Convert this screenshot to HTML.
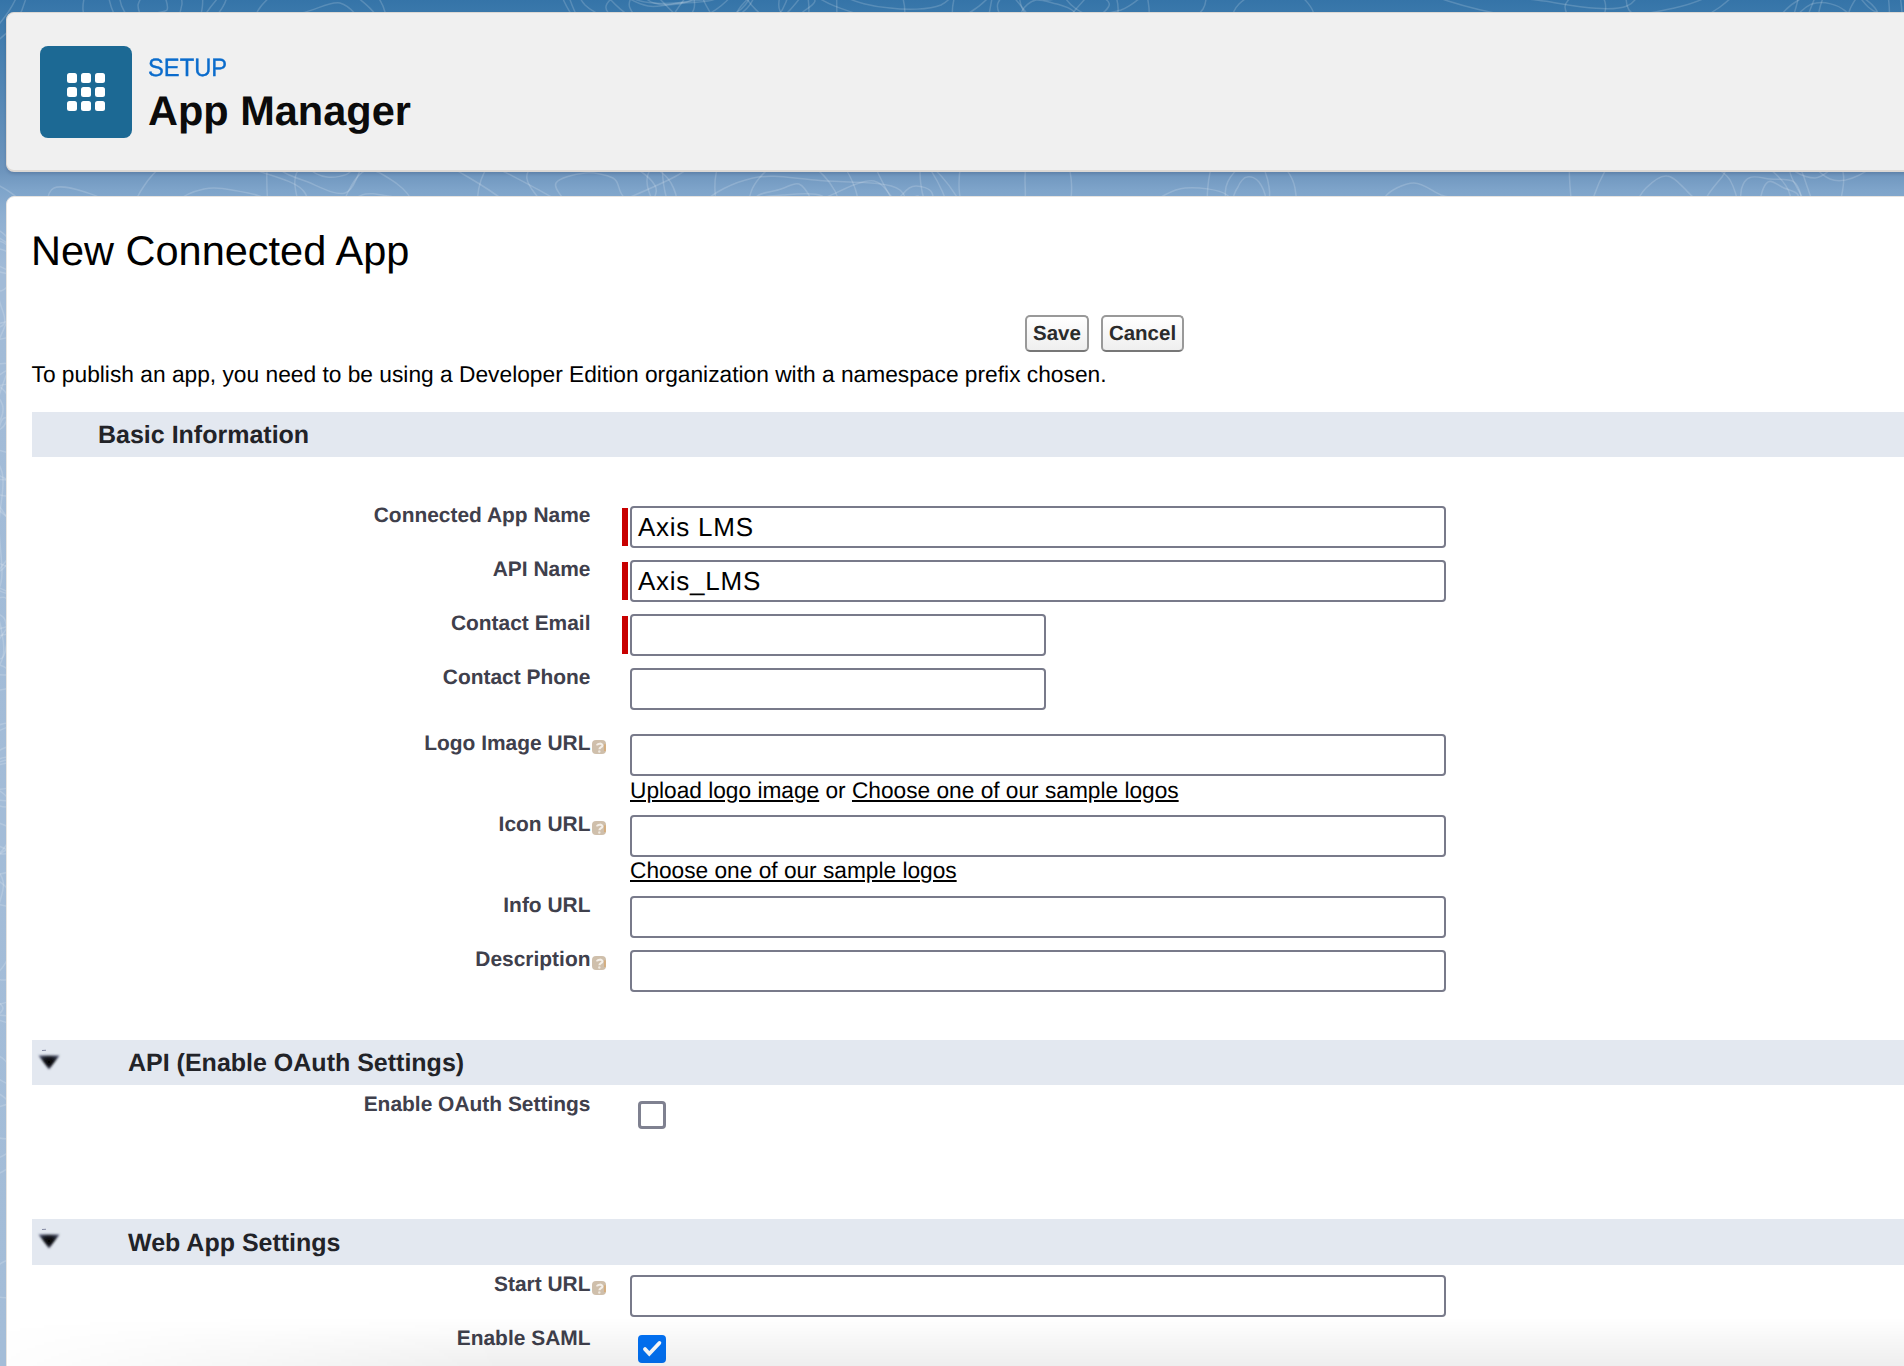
<!DOCTYPE html>
<html><head><meta charset="utf-8">
<style>
html,body{margin:0;padding:0;width:1904px;height:1366px;overflow:hidden;}
*{text-rendering:geometricPrecision;}
body{position:relative;font-family:"Liberation Sans",sans-serif;background:linear-gradient(180deg,#3574a8 0px,#3a78ab 12px,#6e95bd 172px,#7ea4ca 190px,#8eafd1 215px,#a2bbd7 270px,#a4bdd8 1366px);}
.abs{position:absolute;}
.hdr{left:6px;top:12px;width:1920px;height:157px;background:#f0f0f0;border:1px solid #dcd8d4;border-bottom-width:2px;border-radius:8px;box-sizing:content-box;box-shadow:0 2px 3px rgba(20,40,80,0.18);}
.icon{left:40px;top:46px;width:92px;height:92px;background:#1c6994;border-radius:8px;}
.dot{position:absolute;width:10px;height:10px;background:#fff;border-radius:2.5px;}
.setup{left:148px;top:53px;font-size:25px;color:#0b6ccc;-webkit-text-stroke:0.35px #0b6ccc;line-height:30px;transform:scaleX(0.95);transform-origin:0 0;}
.appm{left:148px;top:88px;font-size:41.5px;font-weight:700;color:#0b0b0b;line-height:46px;}
.card{left:6px;top:196px;width:1920px;height:1200px;background:#fff;border:1.5px solid #e6e4e1;border-radius:8px;}
.h1{left:31px;top:226px;font-size:41.5px;color:#000;line-height:50px;white-space:nowrap;}
.btn{top:315px;height:37px;box-sizing:border-box;border:2px solid #999;border-bottom-color:#777;border-radius:5px;background:linear-gradient(#ffffff,#efefef);font-size:20.5px;font-weight:700;color:#2b2b2b;line-height:32px;padding-top:1px;text-align:center;}
.note{left:31.5px;top:359px;font-size:22.75px;color:#000;line-height:30px;white-space:nowrap;}
.sec{left:32px;width:1880px;height:45px;background:#e3e8f0;}
.sech{font-size:25px;font-weight:700;color:#222328;line-height:30px;white-space:nowrap;}
.lbl{font-size:20.95px;font-weight:700;color:#3f404c;line-height:26px;white-space:nowrap;text-align:right;right:1313.5px;margin-top:1px;}
.inp{left:630px;height:42px;box-sizing:border-box;border:2px solid #787a8a;border-radius:4px;background:#fff;}
.w816{width:816px;}
.w416{width:416px;}
.req{left:622px;width:6px;height:38px;background:#c80000;}
.val{left:638px;letter-spacing:0.75px;font-size:26px;color:#000;line-height:32px;white-space:nowrap;}
.lnk{left:630px;font-size:22.7px;color:#000;line-height:28px;white-space:nowrap;}
.lnk u{text-decoration:underline;text-underline-offset:2px;}
.help{width:14px;height:14px;}
.cb{left:638px;width:28px;height:28px;box-sizing:border-box;border:3.6px solid #7f8190;border-radius:4px;background:#fff;}
.cbon{background:#0372f5;border-color:#0372f5;}
.tw{left:36px;width:26px;height:24px;}
.fade{left:8px;top:1318px;width:1896px;height:48px;background:linear-gradient(rgba(0,0,0,0) 0%,rgba(0,0,0,0.065) 100%);-webkit-mask-image:linear-gradient(90deg,rgba(0,0,0,0.1),#000 500px);}
</style></head>
<body>
<svg class="abs" style="left:0;top:0" width="1904" height="1366" viewBox="0 0 1904 1366"><g fill="none" stroke="#fff" stroke-opacity="0.17" stroke-width="1.5"><path d="M870 245C861 247 849 249 840 247C831 245 817 240 815 235C813 230 824 222 828 217C832 213 835 207 842 205C848 204 856 206 865 208C874 209 890 209 895 213C900 217 898 228 893 233C889 239 879 243 870 245"/><path d="M942 238C942 249 917 266 899 272C882 277 853 274 835 270C816 266 795 256 789 247C783 238 793 223 799 215C806 206 817 202 829 196C841 191 862 179 874 181C885 183 890 198 901 208C912 217 942 228 942 238"/><path d="M303 150C305 145 310 140 315 137C320 134 328 131 334 131C340 132 347 137 350 141C353 145 352 149 352 154C352 160 355 168 350 172C346 176 334 178 327 177C319 176 311 171 307 167C303 162 302 155 303 150"/><path d="M319 121C329 119 342 122 351 125C359 129 369 137 371 144C373 151 366 158 362 166C358 174 354 190 345 193C336 196 320 187 308 182C296 178 278 172 275 164C272 156 284 143 291 135C299 128 309 122 319 121"/><path d="M1889 20C1888 29 1884 35 1881 42C1877 49 1875 61 1869 64C1864 67 1853 64 1849 58C1845 52 1845 37 1845 29C1845 20 1848 14 1851 7C1854 1 1858 -5 1863 -8C1869 -12 1881 -17 1885 -12C1889 -7 1890 11 1889 20"/><path d="M1868 -30C1878 -28 1890 -25 1896 -16C1901 -6 1903 14 1902 27C1901 41 1896 51 1889 64C1883 77 1872 107 1863 106C1855 106 1845 77 1838 63C1830 49 1819 36 1818 21C1818 6 1828 -17 1836 -26C1844 -34 1858 -32 1868 -30"/><path d="M1894 133C1877 137 1861 111 1844 100C1828 88 1802 83 1797 65C1793 47 1809 14 1817 -8C1824 -30 1830 -59 1842 -67C1854 -75 1876 -64 1889 -55C1902 -45 1912 -30 1922 -8C1931 14 1950 54 1945 77C1941 101 1911 130 1894 133"/><path d="M1893 -90C1917 -76 1958 -73 1965 -47C1973 -22 1948 31 1938 62C1927 94 1921 121 1903 140C1885 160 1851 188 1830 179C1810 171 1783 120 1778 89C1773 57 1794 27 1800 -10C1806 -47 1800 -119 1816 -132C1831 -145 1868 -104 1893 -90"/><path d="M408 231C403 237 392 238 383 240C374 242 363 246 356 242C349 239 345 227 344 219C342 211 343 202 347 194C351 186 358 172 367 170C375 168 388 178 396 183C404 189 411 196 413 204C415 212 413 225 408 231"/><path d="M1701 -11C1696 -7 1684 -6 1677 -8C1669 -9 1658 -15 1655 -21C1651 -28 1653 -40 1655 -48C1657 -56 1661 -67 1667 -70C1672 -73 1682 -69 1688 -67C1694 -64 1699 -60 1702 -55C1705 -50 1706 -44 1706 -36C1706 -29 1706 -16 1701 -11"/><path d="M1634 -46C1636 -64 1632 -88 1641 -97C1650 -106 1673 -104 1687 -102C1701 -99 1714 -92 1725 -81C1736 -70 1754 -50 1754 -36C1753 -21 1733 -3 1720 7C1708 16 1694 22 1679 23C1663 23 1636 21 1629 10C1621 -2 1632 -28 1634 -46"/><path d="M1904 -61C1910 -61 1920 -62 1925 -59C1929 -57 1931 -51 1931 -47C1930 -44 1925 -41 1921 -38C1916 -35 1911 -32 1905 -32C1898 -31 1889 -32 1883 -34C1876 -37 1865 -43 1866 -47C1867 -51 1881 -55 1888 -57C1894 -59 1898 -61 1904 -61"/><path d="M1941 -22C1930 -17 1914 -17 1900 -17C1886 -17 1863 -17 1854 -22C1845 -28 1845 -41 1846 -50C1846 -60 1847 -75 1858 -80C1868 -85 1893 -84 1909 -83C1926 -82 1951 -81 1959 -75C1968 -68 1964 -53 1961 -45C1958 -36 1951 -27 1941 -22"/><path d="M682 -15C675 -12 669 -6 662 -6C655 -6 644 -10 640 -14C636 -18 640 -24 639 -30C638 -36 631 -47 636 -51C641 -56 660 -57 668 -56C676 -54 679 -46 686 -41C693 -36 710 -31 709 -27C709 -22 690 -19 682 -15"/><path d="M637 0C625 -4 603 -12 600 -20C598 -28 614 -37 622 -48C630 -58 633 -77 648 -82C663 -87 700 -84 711 -76C721 -69 711 -48 713 -36C715 -24 727 -11 721 -4C715 2 689 3 675 3C661 4 649 4 637 0"/><path d="M617 -82C634 -87 663 -80 682 -76C700 -72 719 -65 729 -55C738 -46 743 -29 739 -17C735 -5 721 8 705 16C690 23 665 29 645 27C625 25 596 16 585 5C574 -7 573 -28 578 -43C584 -57 600 -76 617 -82"/><path d="M1812 211C1807 206 1806 203 1802 197C1799 190 1789 176 1790 171C1792 165 1805 166 1811 162C1817 159 1824 148 1829 150C1834 151 1841 164 1843 172C1845 180 1843 190 1841 199C1839 208 1835 223 1830 225C1825 227 1816 216 1812 211"/><path d="M658 -45C658 -52 660 -62 664 -67C669 -71 678 -72 686 -73C693 -74 704 -75 710 -70C716 -66 723 -54 724 -46C724 -38 718 -25 712 -20C706 -16 694 -18 686 -19C679 -20 672 -22 667 -27C662 -31 659 -39 658 -45"/><path d="M700 28C685 28 668 7 657 -4C647 -15 641 -24 638 -37C635 -49 634 -63 640 -77C645 -90 660 -117 672 -118C684 -119 701 -93 711 -83C721 -72 725 -68 731 -54C738 -41 755 -16 750 -3C745 11 716 28 700 28"/><path d="M717 -108C736 -97 758 -93 770 -74C781 -56 794 -19 786 2C778 24 744 50 721 54C698 59 669 41 649 29C629 17 609 3 600 -16C591 -36 588 -68 597 -88C606 -109 633 -137 653 -140C673 -143 697 -119 717 -108"/><path d="M755 -151C777 -137 782 -98 790 -68C799 -37 818 10 804 30C790 51 739 50 707 55C676 60 642 71 617 59C592 47 561 8 558 -19C555 -46 581 -80 599 -102C616 -124 637 -143 663 -151C690 -160 734 -165 755 -151"/><path d="M1249 220C1246 219 1244 217 1242 214C1239 212 1234 208 1233 203C1232 199 1235 191 1238 187C1240 182 1244 177 1247 177C1251 176 1256 178 1259 182C1262 186 1265 193 1266 199C1266 205 1265 217 1262 220C1260 224 1253 221 1249 220"/><path d="M1239 168C1245 164 1254 158 1259 161C1263 164 1268 178 1269 187C1271 196 1269 204 1267 213C1266 222 1264 235 1259 241C1254 246 1243 251 1237 247C1232 243 1230 226 1228 216C1226 206 1224 195 1226 187C1228 179 1234 172 1239 168"/><path d="M1223 260C1215 254 1210 230 1208 213C1206 197 1208 176 1213 162C1218 148 1231 130 1240 129C1250 127 1261 141 1270 151C1279 161 1292 172 1295 188C1298 203 1297 236 1290 246C1283 257 1265 248 1254 250C1243 252 1231 267 1223 260"/><path d="M1796 172C1791 169 1784 164 1784 160C1784 156 1789 151 1794 147C1799 144 1809 141 1816 141C1822 141 1829 147 1833 150C1838 153 1844 157 1843 161C1843 164 1835 167 1830 170C1826 173 1821 178 1815 178C1809 178 1801 175 1796 172"/><path d="M1605 2C1606 6 1606 13 1603 16C1601 19 1594 18 1589 19C1584 20 1577 23 1573 21C1569 19 1565 11 1565 7C1565 3 1570 -2 1574 -5C1577 -8 1581 -8 1585 -9C1589 -9 1594 -11 1597 -9C1600 -7 1604 -2 1605 2"/><path d="M1057 4C1063 6 1068 7 1072 10C1076 13 1082 20 1080 23C1078 26 1066 27 1060 28C1054 29 1050 30 1044 29C1038 28 1030 27 1027 24C1023 21 1021 15 1022 11C1024 7 1030 1 1036 -0C1042 -1 1051 3 1057 4"/><path d="M1027 -19C1039 -21 1057 -15 1070 -11C1084 -8 1107 -4 1109 3C1112 9 1093 20 1086 26C1079 32 1076 38 1066 41C1057 44 1040 48 1031 45C1021 43 1015 34 1009 27C1004 20 995 11 998 3C1001 -4 1015 -16 1027 -19"/><path d="M1002 -18C1014 -27 1040 -38 1058 -37C1076 -36 1100 -23 1109 -13C1119 -4 1119 10 1117 20C1114 31 1107 41 1095 49C1083 57 1062 70 1043 71C1024 71 990 62 981 52C972 43 985 25 989 14C992 2 991 -10 1002 -18"/><path d="M1124 -44C1142 -38 1147 -9 1149 8C1150 24 1147 44 1133 54C1119 63 1087 64 1063 66C1039 68 1010 73 991 66C973 59 958 40 954 26C950 11 953 -12 967 -21C981 -29 1014 -23 1040 -26C1066 -30 1106 -50 1124 -44"/><path d="M1919 -18C1924 -12 1931 -4 1929 2C1927 8 1914 15 1906 17C1897 19 1885 16 1878 13C1870 10 1866 5 1862 0C1859 -5 1854 -12 1857 -17C1859 -21 1868 -25 1876 -28C1883 -32 1896 -38 1903 -36C1911 -35 1915 -25 1919 -18"/><path d="M1838 45C1834 47 1826 44 1821 43C1816 43 1812 43 1809 41C1806 39 1805 35 1804 32C1803 28 1803 22 1806 20C1809 17 1817 18 1822 18C1827 19 1832 20 1835 22C1839 25 1843 29 1843 32C1844 36 1841 43 1838 45"/><path d="M1856 52C1851 57 1835 54 1825 55C1815 55 1803 58 1797 55C1791 52 1788 41 1788 35C1788 29 1791 23 1796 17C1800 12 1808 4 1816 3C1824 1 1838 5 1844 10C1851 14 1855 22 1857 29C1859 36 1862 48 1856 52"/><path d="M1771 55C1766 46 1772 33 1776 24C1780 15 1787 7 1797 1C1807 -5 1823 -14 1836 -13C1849 -12 1868 -1 1875 8C1882 17 1881 31 1878 42C1875 54 1869 70 1857 76C1845 82 1821 80 1807 76C1792 73 1776 63 1771 55"/><path d="M1686 190C1692 197 1705 206 1704 213C1704 220 1689 228 1682 232C1675 236 1670 236 1661 237C1652 238 1634 242 1630 237C1626 232 1633 215 1636 206C1638 198 1641 193 1646 188C1651 183 1660 175 1667 176C1673 176 1680 184 1686 190"/><path d="M1586 243C1580 228 1592 201 1599 183C1607 166 1620 144 1634 139C1648 134 1668 149 1684 156C1700 163 1721 166 1730 180C1738 194 1744 226 1737 239C1729 252 1701 252 1684 258C1668 264 1654 278 1638 276C1622 273 1593 259 1586 243"/><path d="M1590 303C1573 285 1575 247 1573 219C1571 192 1564 158 1577 139C1590 119 1628 101 1652 101C1676 101 1697 122 1720 137C1743 153 1784 171 1790 195C1796 220 1774 262 1755 284C1736 306 1704 324 1676 327C1649 330 1608 320 1590 303"/><path d="M919 221C917 222 914 223 911 223C909 222 904 221 903 218C902 215 901 209 903 207C904 204 907 203 910 201C912 199 916 195 918 196C920 197 921 203 922 206C923 209 923 212 923 214C922 217 920 220 919 221"/><path d="M898 227C895 223 893 214 894 209C895 203 899 197 903 194C906 190 911 186 916 186C921 186 930 188 932 193C935 197 931 207 930 213C929 219 929 224 926 228C923 232 917 236 912 236C907 236 901 232 898 227"/><path d="M687 -32C690 -29 691 -25 691 -21C690 -18 688 -13 684 -11C680 -9 672 -9 667 -10C662 -10 658 -13 655 -16C652 -18 648 -22 649 -24C649 -27 653 -30 657 -33C661 -35 667 -39 672 -39C677 -39 684 -35 687 -32"/><path d="M680 -42C690 -40 705 -40 710 -35C715 -31 712 -20 709 -14C705 -8 696 -1 687 2C678 5 663 6 654 3C646 1 642 -7 638 -13C633 -19 625 -27 627 -33C629 -39 641 -48 650 -49C659 -51 670 -45 680 -42"/><path d="M648 -61C658 -65 684 -64 696 -59C707 -55 713 -43 718 -34C722 -25 730 -12 725 -6C719 -0 696 -0 683 2C670 4 659 8 648 6C637 4 621 -5 619 -11C616 -18 629 -25 633 -34C638 -42 638 -57 648 -61"/><path d="M644 20C637 18 631 12 630 8C628 4 630 -2 634 -6C638 -9 647 -11 655 -12C663 -14 676 -17 682 -15C689 -14 693 -6 694 -1C695 4 695 10 691 14C687 18 677 23 670 24C662 25 650 23 644 20"/><path d="M704 1C707 9 717 19 711 26C705 33 683 42 670 42C656 42 641 32 630 27C619 21 606 14 606 8C605 1 618 -6 626 -12C635 -17 644 -22 655 -24C667 -25 687 -25 695 -21C703 -17 701 -7 704 1"/><path d="M722 29C710 40 698 61 679 64C660 67 627 54 609 45C592 37 581 25 575 12C569 -1 560 -23 572 -33C584 -42 621 -44 646 -47C672 -50 708 -55 726 -48C744 -41 754 -18 754 -5C753 8 735 17 722 29"/><path d="M1540 -49C1539 -54 1536 -60 1539 -64C1543 -69 1555 -74 1562 -74C1570 -75 1576 -68 1585 -65C1593 -62 1612 -61 1614 -57C1616 -53 1604 -45 1598 -41C1591 -37 1584 -32 1576 -31C1567 -30 1553 -31 1547 -34C1541 -37 1541 -44 1540 -49"/><path d="M1529 -26C1516 -31 1496 -41 1494 -50C1492 -59 1504 -74 1516 -80C1528 -86 1548 -86 1565 -87C1583 -88 1610 -91 1621 -86C1631 -80 1632 -63 1630 -54C1628 -46 1616 -39 1607 -33C1597 -27 1586 -19 1573 -18C1560 -17 1542 -21 1529 -26"/><path d="M1648 -40C1639 -24 1644 -1 1627 6C1609 13 1571 5 1544 1C1516 -3 1475 -5 1461 -17C1446 -29 1445 -58 1457 -70C1469 -83 1507 -82 1532 -91C1556 -100 1579 -125 1604 -125C1628 -125 1672 -103 1680 -89C1687 -75 1657 -56 1648 -40"/><path d="M1717 -10C1700 7 1645 14 1610 19C1576 23 1544 23 1510 16C1476 10 1415 -5 1408 -21C1400 -37 1446 -64 1466 -82C1486 -100 1496 -118 1526 -127C1555 -137 1613 -147 1644 -139C1675 -131 1700 -102 1713 -80C1725 -59 1734 -26 1717 -10"/><path d="M889 46C886 47 883 49 881 48C879 47 878 43 877 40C877 38 875 35 876 33C877 30 880 27 883 26C886 25 890 27 892 28C895 30 896 33 897 35C898 38 899 42 898 43C897 45 892 45 889 46"/><path d="M734 22C734 13 742 4 750 -3C758 -10 769 -17 782 -20C796 -22 821 -23 830 -18C839 -12 836 4 837 14C838 24 842 35 836 42C829 50 811 59 797 60C782 61 761 57 751 51C740 44 734 31 734 22"/><path d="M823 76C800 80 779 78 753 74C727 70 676 65 666 51C655 37 678 7 692 -11C705 -28 725 -50 747 -54C769 -59 799 -44 824 -37C849 -29 886 -25 898 -11C909 3 906 34 893 48C881 63 846 72 823 76"/><path d="M-30 -50C-27 -49 -24 -44 -22 -41C-19 -38 -18 -37 -18 -34C-17 -31 -15 -24 -17 -22C-20 -20 -28 -21 -32 -21C-36 -22 -39 -24 -42 -26C-44 -28 -46 -32 -46 -34C-46 -37 -44 -41 -42 -43C-39 -46 -34 -50 -30 -50"/><path d="M168 227C166 219 172 207 178 201C184 195 195 191 204 189C213 187 222 188 232 190C242 192 262 194 267 201C272 207 266 222 260 229C254 236 241 239 230 242C220 245 205 251 195 249C185 246 171 235 168 227"/><path d="M249 168C268 175 298 181 305 193C313 206 307 231 296 245C286 258 261 270 242 273C223 277 199 272 181 265C163 258 139 247 133 234C127 221 134 200 144 186C153 172 172 154 190 151C207 148 230 161 249 168"/><path d="M1577 -25C1580 -26 1584 -27 1586 -26C1588 -25 1588 -20 1589 -17C1590 -14 1593 -10 1592 -7C1591 -5 1586 -5 1584 -4C1581 -3 1578 -1 1576 -2C1574 -3 1573 -7 1572 -10C1571 -13 1568 -17 1569 -20C1570 -22 1574 -24 1577 -25"/><path d="M566 203C563 197 553 188 556 183C559 178 575 174 585 173C594 172 607 175 613 178C619 181 618 188 621 193C624 199 634 208 631 211C628 214 611 212 602 214C592 215 581 221 576 219C570 217 569 208 566 203"/><path d="M528 172C533 163 559 152 576 150C592 149 613 157 626 163C640 170 653 179 656 188C658 196 649 206 641 215C634 224 625 239 612 241C600 243 578 234 567 228C556 222 552 215 545 206C538 197 522 181 528 172"/><path d="M481 219C474 202 478 174 493 162C508 150 548 148 571 147C594 145 614 150 630 156C647 162 665 172 671 183C678 195 681 215 672 224C662 234 637 235 615 242C593 248 561 268 539 264C516 260 489 236 481 219"/><path d="M807 -11C809 -6 815 -2 815 1C814 5 808 8 804 11C800 14 796 20 792 20C788 20 782 15 780 11C778 7 779 -0 780 -4C781 -9 783 -12 786 -15C790 -18 795 -25 799 -24C802 -23 804 -15 807 -11"/><path d="M959 183C959 174 960 163 966 156C971 150 982 145 992 144C1001 144 1016 145 1021 151C1027 157 1025 171 1025 180C1025 190 1027 202 1022 208C1017 215 1004 218 995 218C985 218 972 217 966 211C960 205 959 192 959 183"/><path d="M1019 111C1035 115 1055 133 1063 149C1071 165 1075 193 1068 209C1061 225 1038 238 1022 244C1006 249 987 247 971 242C956 236 937 226 929 211C921 197 917 170 923 156C930 142 952 134 968 127C984 119 1003 107 1019 111"/><path d="M768 221C763 215 753 203 756 198C758 192 774 192 781 189C788 187 794 182 799 184C804 186 808 193 811 199C815 205 822 212 821 219C820 226 813 238 806 240C800 242 790 236 784 232C777 229 773 227 768 221"/><path d="M841 230C838 243 826 257 813 264C801 271 775 280 765 274C755 267 755 239 753 225C751 212 747 202 751 192C754 183 764 171 773 166C783 162 799 161 809 165C819 169 829 180 835 191C840 202 845 218 841 230"/><path d="M773 123C791 121 815 138 829 150C843 162 853 179 857 195C861 212 860 236 851 249C842 263 823 269 805 276C786 282 754 298 739 289C725 281 722 246 719 225C716 203 711 179 720 162C729 146 755 125 773 123"/><path d="M835 110C856 121 866 150 879 175C891 201 918 237 911 264C905 291 865 330 839 336C812 342 776 315 750 301C725 286 701 274 687 250C673 225 655 176 666 153C677 129 725 114 753 107C781 100 814 99 835 110"/><path d="M402 198C418 199 445 195 455 201C465 208 467 226 463 237C458 247 444 260 430 265C415 271 389 275 375 272C360 268 348 254 343 245C337 236 339 227 342 218C346 210 352 198 362 195C372 191 387 197 402 198"/><path d="M468 177C490 190 524 211 522 226C520 241 478 252 456 267C434 282 418 312 392 315C366 319 313 301 298 286C283 271 302 246 302 226C303 206 286 180 301 167C316 154 364 147 392 148C420 150 446 164 468 177"/><path d="M268 218C269 193 259 153 282 139C305 126 369 133 406 138C442 143 468 152 499 169C531 186 601 219 597 239C593 260 513 281 477 292C440 304 413 311 379 310C345 309 292 303 274 288C255 273 267 243 268 218"/><path d="M1195 222C1194 225 1192 227 1189 229C1186 231 1182 234 1177 235C1173 235 1166 232 1163 230C1161 227 1161 222 1162 220C1164 217 1168 216 1171 214C1175 212 1178 210 1182 210C1186 210 1192 212 1194 214C1196 216 1195 220 1195 222"/><path d="M1221 212C1224 216 1213 225 1208 230C1203 235 1198 240 1191 242C1183 244 1173 244 1164 243C1155 241 1141 236 1138 231C1135 226 1140 215 1146 210C1151 206 1164 205 1171 205C1179 204 1183 204 1191 205C1199 206 1218 207 1221 212"/><path d="M1215 250C1205 256 1188 259 1174 258C1161 258 1144 253 1135 246C1126 239 1118 225 1121 217C1124 210 1144 205 1154 200C1165 196 1172 189 1185 188C1197 187 1219 189 1227 195C1236 201 1239 216 1237 225C1235 234 1226 244 1215 250"/><path d="M937 -47C946 -41 959 -33 960 -24C960 -16 953 -1 941 5C929 10 906 10 890 8C874 7 852 2 843 -5C834 -13 833 -28 837 -37C841 -46 855 -57 867 -60C879 -63 896 -59 908 -57C919 -55 929 -52 937 -47"/><path d="M938 26C917 30 889 23 868 17C847 11 821 3 812 -8C803 -20 807 -39 815 -53C823 -67 839 -84 861 -91C883 -98 923 -102 945 -96C968 -90 989 -70 996 -55C1004 -40 1002 -20 992 -7C982 7 958 22 938 26"/><path d="M143 -4C145 -7 148 -10 151 -10C154 -11 158 -10 161 -8C163 -6 165 -3 166 -0C167 3 168 8 167 10C165 12 160 12 156 13C152 15 146 19 143 18C140 16 138 9 138 5C139 1 141 -2 143 -4"/><path d="M120 -0C120 -7 124 -17 130 -23C136 -28 149 -33 156 -31C164 -30 171 -21 176 -15C180 -9 182 -2 182 4C181 10 178 20 173 23C168 26 159 23 152 23C145 22 137 24 132 20C126 16 121 7 120 -0"/><path d="M136 -49C147 -52 167 -48 178 -41C189 -35 198 -23 201 -12C204 -1 203 15 197 22C191 30 174 29 164 31C154 34 143 39 135 36C127 33 119 23 114 14C110 5 106 -8 110 -19C113 -29 124 -45 136 -49"/><path d="M198 34C187 45 175 55 161 58C146 61 123 61 110 53C97 45 84 24 83 10C82 -5 93 -26 104 -34C114 -43 133 -40 148 -42C164 -45 183 -54 197 -48C210 -42 227 -20 227 -6C227 8 209 24 198 34"/><path d="M1032 -33C1033 -38 1034 -48 1038 -52C1042 -55 1053 -56 1057 -53C1061 -49 1061 -39 1063 -32C1065 -26 1068 -19 1067 -14C1065 -9 1059 -3 1054 -1C1049 1 1042 -0 1038 -3C1034 -6 1032 -13 1031 -18C1029 -22 1030 -27 1032 -33"/><path d="M1072 -56C1081 -50 1097 -37 1098 -26C1099 -15 1084 -0 1076 9C1068 19 1056 33 1047 32C1038 32 1029 15 1021 6C1014 -3 1004 -13 1003 -24C1002 -35 1008 -54 1015 -61C1023 -67 1037 -64 1046 -63C1055 -62 1063 -62 1072 -56"/><path d="M1774 242C1770 241 1768 228 1765 222C1763 215 1759 209 1760 203C1760 196 1764 184 1768 182C1772 179 1779 186 1784 188C1789 190 1796 191 1798 195C1800 200 1797 209 1795 215C1794 220 1791 222 1788 227C1784 231 1778 243 1774 242"/><path d="M289 25C293 22 302 17 308 17C314 18 320 24 324 27C329 31 335 34 335 38C335 41 329 44 325 48C321 51 316 57 312 58C307 58 301 53 296 50C292 47 287 44 285 40C284 36 285 29 289 25"/><path d="M290 63C281 59 274 54 269 46C263 38 251 21 257 16C262 10 287 15 301 13C315 11 329 1 340 3C351 6 361 20 365 29C368 38 367 53 360 60C353 67 333 71 322 71C310 72 299 67 290 63"/><path d="M253 39C255 26 252 16 262 5C271 -5 290 -23 309 -26C327 -28 360 -18 373 -8C386 3 389 24 387 38C384 51 373 66 360 73C348 81 330 83 311 85C292 87 257 92 247 85C238 77 251 53 253 39"/><path d="M193 58C187 41 203 15 218 -2C234 -18 262 -40 284 -41C306 -42 334 -19 350 -8C367 4 374 11 384 26C395 42 422 72 413 84C404 97 356 97 330 100C304 102 281 105 258 98C235 91 200 75 193 58"/><path d="M742 202C749 197 769 196 783 195C796 194 814 192 822 196C830 200 829 212 830 219C830 225 829 231 824 237C819 242 810 250 799 252C789 254 770 252 761 248C751 244 746 235 742 228C739 220 735 208 742 202"/><path d="M895 244C884 258 857 272 835 276C813 281 784 275 764 270C743 265 722 257 712 246C702 235 696 216 703 205C710 193 735 182 753 178C772 174 790 178 815 180C839 183 887 180 900 190C913 201 905 229 895 244"/><path d="M947 203C955 227 959 263 938 279C917 296 860 299 820 304C780 308 723 319 698 308C673 297 678 261 671 238C663 215 637 186 651 169C666 152 720 141 759 135C799 129 857 122 888 133C919 145 938 178 947 203"/><path d="M973 300C949 318 865 309 816 312C766 315 720 329 677 318C633 307 552 270 552 246C553 223 643 195 678 175C713 155 728 132 763 126C799 120 857 127 890 140C923 153 948 179 962 206C976 232 998 282 973 300"/><path d="M89 218C89 222 90 229 87 230C84 232 75 228 70 227C65 226 61 225 58 222C55 219 51 214 52 210C52 207 58 201 63 200C68 198 76 200 81 202C85 204 88 207 90 210C91 212 90 215 89 218"/><path d="M62 247C52 244 38 237 35 231C32 224 42 216 45 209C48 202 47 191 54 188C60 185 76 189 85 192C94 195 105 198 108 203C111 208 107 215 105 221C103 228 104 239 97 243C90 248 73 249 62 247"/><path d="M1914 2C1896 -2 1869 -11 1865 -20C1860 -29 1878 -42 1886 -51C1895 -60 1900 -67 1914 -72C1928 -78 1955 -86 1969 -83C1982 -80 1987 -64 1996 -54C2004 -44 2023 -32 2019 -24C2016 -15 1991 -5 1973 -0C1956 4 1932 5 1914 2"/><path d="M776 -73C782 -73 789 -70 793 -65C797 -61 800 -55 802 -48C804 -41 808 -29 805 -23C802 -17 791 -13 785 -13C779 -13 774 -19 769 -23C764 -27 758 -30 755 -37C752 -44 750 -59 754 -65C757 -71 769 -73 776 -73"/><path d="M812 -72C818 -64 822 -48 821 -37C820 -26 812 -16 804 -7C796 3 784 20 774 20C763 20 748 3 743 -8C738 -20 744 -33 744 -49C744 -64 737 -93 744 -100C751 -106 774 -91 785 -87C796 -82 806 -80 812 -72"/><path d="M1758 222C1752 221 1747 212 1744 207C1741 202 1740 198 1741 193C1741 188 1744 180 1749 178C1754 175 1762 178 1770 179C1777 180 1789 178 1794 182C1799 186 1803 198 1800 203C1797 208 1783 208 1776 211C1769 214 1763 222 1758 222"/><path d="M1705 208C1702 199 1714 187 1722 177C1729 166 1737 149 1749 146C1761 144 1783 154 1793 161C1803 168 1804 179 1808 189C1811 198 1817 211 1812 219C1808 228 1791 239 1779 241C1767 243 1751 236 1739 230C1727 225 1708 217 1705 208"/><path d="M1239 4C1244 -1 1253 -6 1262 -8C1272 -9 1288 -10 1297 -6C1305 -2 1313 8 1314 15C1316 22 1311 34 1304 38C1297 43 1281 41 1270 41C1260 41 1247 43 1241 39C1234 36 1232 27 1232 21C1232 15 1234 9 1239 4"/><path d="M1089 15C1080 13 1070 5 1066 -1C1062 -8 1059 -19 1065 -24C1070 -30 1085 -33 1097 -35C1108 -37 1122 -39 1133 -37C1143 -34 1159 -26 1160 -20C1161 -14 1145 -6 1139 -1C1132 4 1129 7 1121 10C1112 12 1098 17 1089 15"/><path d="M1149 39C1129 44 1102 44 1082 40C1061 36 1035 26 1026 15C1017 3 1017 -18 1026 -28C1036 -38 1065 -39 1083 -44C1101 -49 1118 -57 1136 -56C1155 -54 1182 -45 1193 -34C1204 -24 1210 -3 1203 9C1195 22 1169 34 1149 39"/><path d="M1415 219C1412 216 1408 214 1407 211C1407 208 1409 204 1412 201C1416 199 1423 198 1427 198C1432 198 1438 201 1441 203C1444 205 1445 209 1444 211C1444 214 1443 218 1440 220C1437 222 1431 225 1426 225C1422 225 1418 221 1415 219"/><path d="M1414 183C1423 183 1432 191 1441 195C1450 198 1464 199 1468 204C1471 208 1467 219 1461 223C1456 227 1444 227 1435 229C1426 231 1414 237 1407 235C1399 233 1394 224 1391 218C1387 212 1382 203 1385 197C1389 191 1404 183 1414 183"/><path d="M-20 -30C-18 -24 -20 -16 -23 -10C-25 -5 -29 0 -34 3C-39 6 -48 8 -53 6C-58 4 -62 -5 -63 -10C-64 -15 -62 -22 -60 -26C-58 -30 -54 -32 -50 -34C-45 -37 -39 -43 -34 -43C-29 -42 -22 -35 -20 -30"/><path d="M-69 -4C-73 -12 -76 -20 -75 -28C-73 -36 -68 -44 -60 -50C-53 -57 -40 -69 -30 -68C-21 -67 -5 -53 -2 -44C1 -34 -8 -19 -12 -10C-16 -1 -21 4 -28 9C-35 15 -47 24 -54 22C-61 20 -66 4 -69 -4"/><path d="M21 -21C20 -5 10 11 -0 23C-11 36 -26 52 -41 54C-56 56 -79 46 -91 34C-103 22 -116 -2 -114 -17C-112 -31 -89 -40 -77 -52C-66 -65 -59 -87 -46 -91C-32 -94 -6 -85 5 -73C16 -62 22 -37 21 -21"/><path d="M-27 52C-42 54 -59 40 -73 31C-87 22 -109 12 -113 -2C-117 -16 -106 -37 -98 -55C-90 -72 -80 -101 -63 -108C-46 -115 -12 -109 3 -97C19 -85 27 -56 29 -37C31 -17 26 5 17 20C8 35 -12 50 -27 52"/><path d="M-23 1073C-18 1070 -2 1079 6 1083C14 1086 24 1089 27 1094C29 1100 24 1107 22 1115C20 1122 19 1134 13 1137C7 1141 -8 1137 -16 1133C-23 1130 -31 1124 -33 1118C-36 1113 -31 1107 -30 1099C-28 1092 -29 1076 -23 1073"/><path d="M-7 1159C-16 1160 -31 1161 -37 1151C-43 1142 -45 1115 -43 1102C-41 1088 -31 1078 -24 1070C-17 1062 -9 1055 -2 1056C5 1057 10 1068 17 1078C24 1087 39 1101 39 1112C39 1123 24 1138 16 1145C9 1153 2 1158 -7 1159"/><path d="M34 1025C47 1031 67 1040 70 1050C72 1060 58 1077 49 1085C40 1094 30 1097 17 1101C4 1105 -18 1114 -29 1110C-41 1105 -51 1085 -52 1074C-53 1062 -43 1051 -35 1041C-28 1031 -19 1018 -7 1016C4 1013 21 1019 34 1025"/><path d="M-17 437C-20 436 -26 428 -27 422C-28 415 -24 407 -23 399C-22 392 -21 379 -18 376C-15 373 -9 380 -5 383C-1 387 5 389 7 395C9 402 8 416 6 422C4 429 -2 430 -6 433C-9 435 -13 439 -17 437"/><path d="M-49 518C-48 510 -43 504 -39 499C-35 493 -31 487 -25 486C-20 486 -11 489 -9 496C-6 503 -9 515 -9 525C-10 536 -7 551 -10 558C-14 565 -25 568 -31 566C-36 564 -43 554 -46 546C-49 538 -50 526 -49 518"/><path d="M-25 443C-15 444 -2 458 2 472C6 486 -1 507 -1 526C-1 545 5 574 0 586C-5 597 -22 598 -30 594C-39 591 -48 577 -52 564C-57 551 -55 535 -56 518C-56 501 -60 473 -55 461C-49 448 -34 441 -25 443"/><path d="M-31 1137C-31 1130 -32 1120 -30 1116C-28 1112 -22 1115 -18 1115C-14 1115 -9 1113 -7 1116C-5 1120 -6 1128 -6 1135C-6 1141 -3 1152 -5 1155C-7 1159 -13 1155 -17 1155C-21 1155 -26 1159 -28 1156C-31 1153 -31 1143 -31 1137"/><path d="M-25 1094C-18 1091 -6 1090 1 1095C9 1100 18 1112 20 1123C22 1135 19 1153 14 1161C9 1170 -3 1175 -10 1176C-18 1177 -24 1172 -32 1167C-39 1162 -53 1156 -54 1148C-56 1139 -46 1125 -42 1116C-37 1107 -32 1098 -25 1094"/><path d="M12 1298C7 1298 -3 1298 -5 1295C-8 1291 -5 1284 -4 1279C-3 1274 -3 1268 0 1264C4 1261 14 1257 18 1258C23 1260 26 1268 28 1273C30 1277 31 1279 30 1283C30 1287 30 1292 26 1295C23 1297 17 1298 12 1298"/><path d="M-45 568C-53 561 -68 548 -67 540C-66 531 -46 527 -37 519C-29 512 -22 495 -15 495C-7 495 3 511 8 519C12 527 14 537 13 545C12 553 8 559 2 566C-3 573 -12 586 -20 586C-28 586 -37 576 -45 568"/><path d="M-20 272C-23 269 -18 261 -17 257C-16 253 -16 250 -13 248C-11 245 -6 241 -2 241C1 241 6 244 9 247C12 250 14 254 14 258C15 263 16 271 13 273C10 276 2 272 -4 271C-9 271 -18 274 -20 272"/><path d="M-0 291C-5 291 -10 283 -13 278C-16 273 -16 267 -17 261C-18 254 -21 244 -19 239C-17 233 -10 229 -6 229C-1 229 3 233 7 237C10 241 15 247 16 254C17 260 16 271 13 278C11 284 4 291 -0 291"/><path d="M-25 968C-35 964 -52 959 -54 952C-56 945 -44 934 -38 927C-32 919 -27 908 -19 905C-10 902 6 905 15 909C24 914 32 923 35 932C39 941 41 955 36 963C31 971 15 979 5 980C-5 981 -15 973 -25 968"/><path d="M-34 900C-29 889 -16 879 -8 879C0 879 11 891 17 901C22 911 24 926 26 941C27 955 29 979 23 990C18 1000 2 1005 -6 1004C-15 1002 -24 989 -29 979C-34 969 -38 956 -39 943C-40 930 -39 911 -34 900"/><path d="M21 1021C9 1028 -12 1016 -24 1007C-35 999 -45 985 -50 971C-55 956 -56 935 -53 920C-49 905 -40 892 -29 881C-17 869 5 844 16 849C27 854 32 892 38 912C44 932 54 951 52 970C49 988 34 1015 21 1021"/><path d="M25 772C23 777 21 782 16 785C12 787 3 790 -2 789C-7 787 -10 780 -13 775C-15 770 -19 763 -17 759C-16 755 -7 753 -2 751C3 749 10 744 15 745C19 746 23 754 25 759C26 763 26 768 25 772"/><path d="M8 723C16 724 26 730 30 738C34 745 35 760 34 769C33 778 28 786 23 792C18 799 11 807 5 807C-2 807 -10 799 -15 792C-20 785 -25 774 -25 764C-25 754 -20 742 -14 735C-9 728 1 723 8 723"/><path d="M2 634C4 643 5 656 -0 664C-5 672 -16 681 -26 683C-35 685 -52 684 -58 678C-65 671 -63 655 -63 645C-63 636 -62 627 -58 621C-54 615 -46 610 -38 608C-30 606 -16 602 -10 607C-3 611 1 624 2 634"/><path d="M-6 1018C-9 1021 -12 1025 -16 1026C-20 1027 -27 1028 -32 1025C-36 1022 -42 1014 -42 1010C-41 1005 -32 1002 -28 998C-24 995 -21 991 -18 991C-14 991 -11 996 -7 998C-4 1001 3 1005 3 1008C3 1011 -3 1016 -6 1018"/><path d="M-26 652C-29 649 -31 640 -31 633C-31 626 -29 614 -25 611C-21 607 -14 611 -9 612C-4 613 1 614 4 618C7 622 7 632 7 638C7 645 5 656 2 658C-1 661 -8 657 -12 656C-17 655 -22 656 -26 652"/><path d="M16 671C13 678 -1 674 -8 674C-16 674 -24 677 -28 671C-33 665 -33 650 -33 640C-33 629 -34 616 -31 610C-28 604 -20 605 -13 603C-7 601 3 594 7 599C11 604 10 620 11 632C13 644 20 664 16 671"/><path d="M-19 690C-32 689 -52 685 -60 674C-68 663 -70 640 -67 626C-64 612 -53 597 -42 590C-32 583 -16 585 -4 587C7 590 15 596 26 606C37 616 64 635 63 648C62 660 35 676 21 683C8 690 -5 692 -19 690"/><path d="M-58 415C-63 410 -69 403 -69 397C-68 390 -63 380 -56 376C-49 371 -35 369 -27 371C-19 373 -14 382 -9 388C-4 395 4 402 3 410C3 417 -4 430 -11 434C-19 437 -34 432 -42 429C-50 426 -54 420 -58 415"/><path d="M-14 529C-12 534 -5 540 -6 546C-7 551 -14 560 -19 562C-24 563 -32 559 -37 556C-42 553 -49 549 -50 544C-51 539 -48 531 -45 527C-43 523 -38 521 -34 519C-30 517 -23 511 -20 513C-17 515 -17 523 -14 529"/><path d="M-56 546C-56 537 -47 526 -43 518C-39 510 -38 501 -33 497C-28 493 -19 489 -15 494C-11 499 -10 517 -9 527C-9 537 -10 544 -12 554C-15 564 -18 583 -23 585C-27 588 -35 576 -41 570C-46 563 -55 554 -56 546"/><path d="M-73 833C-73 824 -61 815 -54 806C-46 798 -38 784 -27 783C-17 781 1 790 7 797C13 804 10 817 9 825C9 834 10 841 5 847C1 853 -8 859 -17 862C-27 864 -43 866 -52 861C-61 856 -72 842 -73 833"/><path d="M-34 551C-45 544 -64 536 -66 526C-67 516 -51 499 -42 491C-34 484 -24 482 -14 481C-5 479 6 478 16 483C25 488 41 501 42 510C43 520 28 532 21 542C13 553 6 571 -3 572C-12 574 -24 559 -34 551"/><path d="M-36 453C-22 447 -3 448 11 454C24 460 38 473 46 488C54 503 61 527 57 545C53 562 36 588 22 594C8 599 -12 584 -29 577C-45 571 -71 569 -79 555C-88 540 -85 507 -78 490C-71 473 -51 459 -36 453"/><path d="M-121 481C-115 456 -72 447 -50 428C-27 410 -2 364 16 369C34 374 48 428 60 458C73 489 97 527 92 551C87 575 49 581 28 601C6 622 -18 677 -37 674C-55 671 -70 613 -84 581C-98 549 -127 507 -121 481"/><path d="M27 428C34 431 41 432 46 438C50 443 57 454 54 461C52 469 41 477 33 480C24 483 11 482 4 478C-4 475 -11 465 -12 459C-13 453 -6 447 -4 440C-1 433 -1 420 4 418C9 416 20 425 27 428"/><path d="M49 428C55 440 70 450 69 460C68 470 52 482 42 488C31 494 19 498 7 496C-5 495 -23 488 -29 478C-35 469 -31 451 -28 437C-26 423 -25 401 -15 393C-5 384 21 380 32 386C42 392 43 415 49 428"/><path d="M14 364C23 361 38 381 45 394C53 407 58 424 60 443C62 461 63 493 57 506C50 519 32 523 21 522C10 521 -1 512 -9 500C-17 489 -27 468 -27 453C-26 439 -13 427 -7 412C0 397 6 367 14 364"/><path d="M-13 804C-8 798 4 801 11 801C18 800 24 797 30 800C37 803 48 810 50 817C51 824 46 838 41 843C36 849 27 849 20 851C13 852 4 856 -2 853C-9 849 -17 840 -19 832C-21 824 -18 809 -13 804"/><path d="M38 793C47 803 68 810 69 821C71 832 55 852 46 861C38 869 28 868 17 870C6 872 -11 879 -19 872C-27 865 -30 843 -31 827C-31 812 -31 790 -24 779C-17 768 3 758 13 760C23 763 28 783 38 793"/><path d="M35 815C32 827 29 841 24 846C18 852 8 851 1 847C-5 844 -11 834 -14 825C-16 817 -15 806 -14 796C-13 786 -12 771 -7 764C-3 758 7 756 15 757C23 759 37 763 41 772C44 782 38 802 35 815"/><path d="M4 324C1 329 -10 329 -18 332C-25 335 -35 345 -43 343C-51 342 -64 330 -65 323C-66 316 -52 309 -48 301C-44 293 -46 279 -39 276C-33 272 -15 275 -9 280C-2 284 -2 296 -0 303C2 310 7 319 4 324"/><path d="M19 282C22 293 10 314 5 326C0 338 -4 348 -11 353C-18 359 -29 362 -38 359C-47 356 -61 346 -63 335C-66 325 -56 311 -53 298C-50 285 -51 264 -44 258C-38 252 -23 257 -13 261C-2 266 16 271 19 282"/><path d="M17 259C22 265 18 278 18 288C18 298 21 311 16 316C11 322 -4 325 -11 323C-18 321 -23 312 -29 306C-34 300 -41 294 -42 287C-43 280 -38 271 -32 264C-27 258 -19 249 -10 248C-2 247 12 252 17 259"/><path d="M-51 243C-43 233 -26 234 -16 234C-5 234 2 239 11 246C21 253 38 264 40 278C42 291 33 317 25 327C18 337 4 339 -6 340C-15 340 -22 336 -32 329C-43 322 -64 313 -68 299C-71 285 -60 254 -51 243"/><path d="M-57 350C-77 339 -118 322 -123 301C-128 280 -104 242 -87 221C-70 201 -43 180 -22 180C-0 180 25 203 40 219C55 235 66 257 68 278C70 299 67 330 55 344C43 359 16 363 -3 364C-21 365 -37 360 -57 350"/><path d="M13 723C7 728 3 730 -3 731C-10 732 -20 733 -24 727C-29 721 -31 706 -30 696C-30 686 -27 672 -22 667C-17 661 -7 663 -1 665C5 666 9 670 15 676C21 682 34 693 34 701C33 709 20 718 13 723"/><path d="M83 737C74 751 41 756 20 760C-1 765 -28 772 -44 765C-59 758 -68 733 -73 717C-79 700 -85 677 -77 664C-69 650 -44 643 -24 636C-4 630 27 618 43 625C60 632 70 659 77 678C84 696 93 724 83 737"/><path d="M-30 855C-25 852 -16 860 -10 864C-5 868 2 874 3 881C5 888 1 896 -1 905C-3 914 -4 933 -9 936C-14 938 -24 927 -30 922C-35 917 -42 912 -44 905C-46 898 -44 887 -42 878C-39 870 -35 857 -30 855"/><path d="M24 836C39 847 53 868 53 882C53 897 35 908 25 923C15 939 6 972 -6 974C-19 975 -39 946 -52 934C-66 922 -82 915 -85 902C-89 889 -83 870 -74 856C-65 842 -49 822 -32 819C-16 815 10 826 24 836"/><path d="M19 628C12 633 2 636 -7 636C-16 635 -30 632 -36 625C-42 617 -44 602 -42 591C-41 580 -35 563 -26 559C-18 555 -3 563 6 566C16 569 27 572 31 578C35 585 34 598 32 606C30 614 25 623 19 628"/></g></svg>
<div class="abs hdr"></div>
<div class="abs icon">
  <div class="dot" style="left:26.5px;top:26.5px"></div><div class="dot" style="left:40.5px;top:26.5px"></div><div class="dot" style="left:54.5px;top:26.5px"></div>
  <div class="dot" style="left:26.5px;top:40.5px"></div><div class="dot" style="left:40.5px;top:40.5px"></div><div class="dot" style="left:54.5px;top:40.5px"></div>
  <div class="dot" style="left:26.5px;top:54.5px"></div><div class="dot" style="left:40.5px;top:54.5px"></div><div class="dot" style="left:54.5px;top:54.5px"></div>
</div>
<div class="abs setup">SETUP</div>
<div class="abs appm">App Manager</div>

<div class="abs card"></div>
<div class="abs h1">New Connected App</div>
<div class="abs btn" style="left:1025px;width:64px">Save</div>
<div class="abs btn" style="left:1101px;width:83px">Cancel</div>
<div class="abs note">To publish an app, you need to be using a Developer Edition organization with a namespace prefix chosen.</div>

<div class="abs sec" style="top:412px"></div>
<div class="abs sech" style="left:98px;top:420px">Basic Information</div>

<div class="abs lbl" style="top:502px">Connected App Name</div>
<div class="abs req" style="top:508px"></div>
<div class="abs inp w816" style="top:506px"></div>
<div class="abs val" style="top:511px">Axis LMS</div>

<div class="abs lbl" style="top:556px">API Name</div>
<div class="abs req" style="top:562px"></div>
<div class="abs inp w816" style="top:560px"></div>
<div class="abs val" style="top:565px">Axis_LMS</div>

<div class="abs lbl" style="top:610px">Contact Email</div>
<div class="abs req" style="top:616px"></div>
<div class="abs inp w416" style="top:614px"></div>

<div class="abs lbl" style="top:664px">Contact Phone</div>
<div class="abs inp w416" style="top:668px"></div>

<div class="abs lbl" style="top:730px">Logo Image URL</div>
<div class="abs help" style="left:592px;top:740px"><svg width="14" height="14" viewBox="0 0 14 14"><rect width="14" height="14" rx="4" fill="#cfbfab"/><rect x="12.3" y="4.3" width="1.3" height="6.8" fill="#d8a66a"/><path d="M5 5.4 C5.4 3.2 10.4 3 10.4 5.4 C10.4 7.3 7.4 7.1 7.4 9.3" stroke="#f4efe8" stroke-width="2.1" fill="none"/><circle cx="7.3" cy="11.5" r="1.2" fill="#eee8df"/></svg></div>
<div class="abs inp w816" style="top:734px"></div>
<div class="abs lnk" style="top:776px"><u>Upload logo image</u> or <u>Choose one of our sample logos</u></div>

<div class="abs lbl" style="top:811px">Icon URL</div>
<div class="abs help" style="left:592px;top:821px"><svg width="14" height="14" viewBox="0 0 14 14"><rect width="14" height="14" rx="4" fill="#cfbfab"/><rect x="12.3" y="4.3" width="1.3" height="6.8" fill="#d8a66a"/><path d="M5 5.4 C5.4 3.2 10.4 3 10.4 5.4 C10.4 7.3 7.4 7.1 7.4 9.3" stroke="#f4efe8" stroke-width="2.1" fill="none"/><circle cx="7.3" cy="11.5" r="1.2" fill="#eee8df"/></svg></div>
<div class="abs inp w816" style="top:815px"></div>
<div class="abs lnk" style="top:856px"><u>Choose one of our sample logos</u></div>

<div class="abs lbl" style="top:892px">Info URL</div>
<div class="abs inp w816" style="top:896px"></div>

<div class="abs lbl" style="top:946px">Description</div>
<div class="abs help" style="left:592px;top:956px"><svg width="14" height="14" viewBox="0 0 14 14"><rect width="14" height="14" rx="4" fill="#cfbfab"/><rect x="12.3" y="4.3" width="1.3" height="6.8" fill="#d8a66a"/><path d="M5 5.4 C5.4 3.2 10.4 3 10.4 5.4 C10.4 7.3 7.4 7.1 7.4 9.3" stroke="#f4efe8" stroke-width="2.1" fill="none"/><circle cx="7.3" cy="11.5" r="1.2" fill="#eee8df"/></svg></div>
<div class="abs inp w816" style="top:950px"></div>

<div class="abs sec" style="top:1040px"></div>
<div class="abs tw" style="top:1049px"><svg width="26" height="24" viewBox="0 0 26 24"><defs><radialGradient id="tg1" cx="0.5" cy="0.45" r="0.6"><stop offset="0" stop-color="#000"/><stop offset="0.55" stop-color="#1a1c24"/><stop offset="1" stop-color="#4a5270"/></radialGradient><filter id="tb1" filterUnits="userSpaceOnUse" x="0" y="0" width="26" height="24"><feGaussianBlur stdDeviation="0.8"/></filter></defs><path d="M6 1.5 L10 1.2" stroke="#5a6080" stroke-width="1.1" opacity="0.7"/><path d="M2.5 6.5 H23.5 L13 20.5 Z" fill="url(#tg1)" filter="url(#tb1)"/></svg></div>
<div class="abs sech" style="left:128px;top:1048px">API (Enable OAuth Settings)</div>
<div class="abs lbl" style="top:1091px">Enable OAuth Settings</div>
<div class="abs cb" style="top:1101px"></div>

<div class="abs sec" style="top:1219px;height:46px"></div>
<div class="abs tw" style="top:1228px"><svg width="26" height="24" viewBox="0 0 26 24"><defs><radialGradient id="tg2" cx="0.5" cy="0.45" r="0.6"><stop offset="0" stop-color="#000"/><stop offset="0.55" stop-color="#1a1c24"/><stop offset="1" stop-color="#4a5270"/></radialGradient><filter id="tb2" filterUnits="userSpaceOnUse" x="0" y="0" width="26" height="24"><feGaussianBlur stdDeviation="0.8"/></filter></defs><path d="M6 1.5 L10 1.2" stroke="#5a6080" stroke-width="1.1" opacity="0.7"/><path d="M2.5 6.5 H23.5 L13 20.5 Z" fill="url(#tg2)" filter="url(#tb2)"/></svg></div>
<div class="abs sech" style="left:128px;top:1227.5px">Web App Settings</div>
<div class="abs lbl" style="top:1271px">Start URL</div>
<div class="abs help" style="left:592px;top:1281px"><svg width="14" height="14" viewBox="0 0 14 14"><rect width="14" height="14" rx="4" fill="#cfbfab"/><rect x="12.3" y="4.3" width="1.3" height="6.8" fill="#d8a66a"/><path d="M5 5.4 C5.4 3.2 10.4 3 10.4 5.4 C10.4 7.3 7.4 7.1 7.4 9.3" stroke="#f4efe8" stroke-width="2.1" fill="none"/><circle cx="7.3" cy="11.5" r="1.2" fill="#eee8df"/></svg></div>
<div class="abs inp w816" style="top:1275px"></div>
<div class="abs lbl" style="top:1325px">Enable SAML</div>
<div class="abs cb cbon" style="top:1335px"><svg width="28" height="28" viewBox="0 0 28 28" style="position:absolute;left:-3.6px;top:-3.6px"><path d="M8 15.1 L12.3 19.7 L22.4 9" stroke="#fff" stroke-width="3.8" fill="none" stroke-linecap="round" stroke-linejoin="miter"/></svg></div>

<div class="abs fade"></div>
</body></html>
